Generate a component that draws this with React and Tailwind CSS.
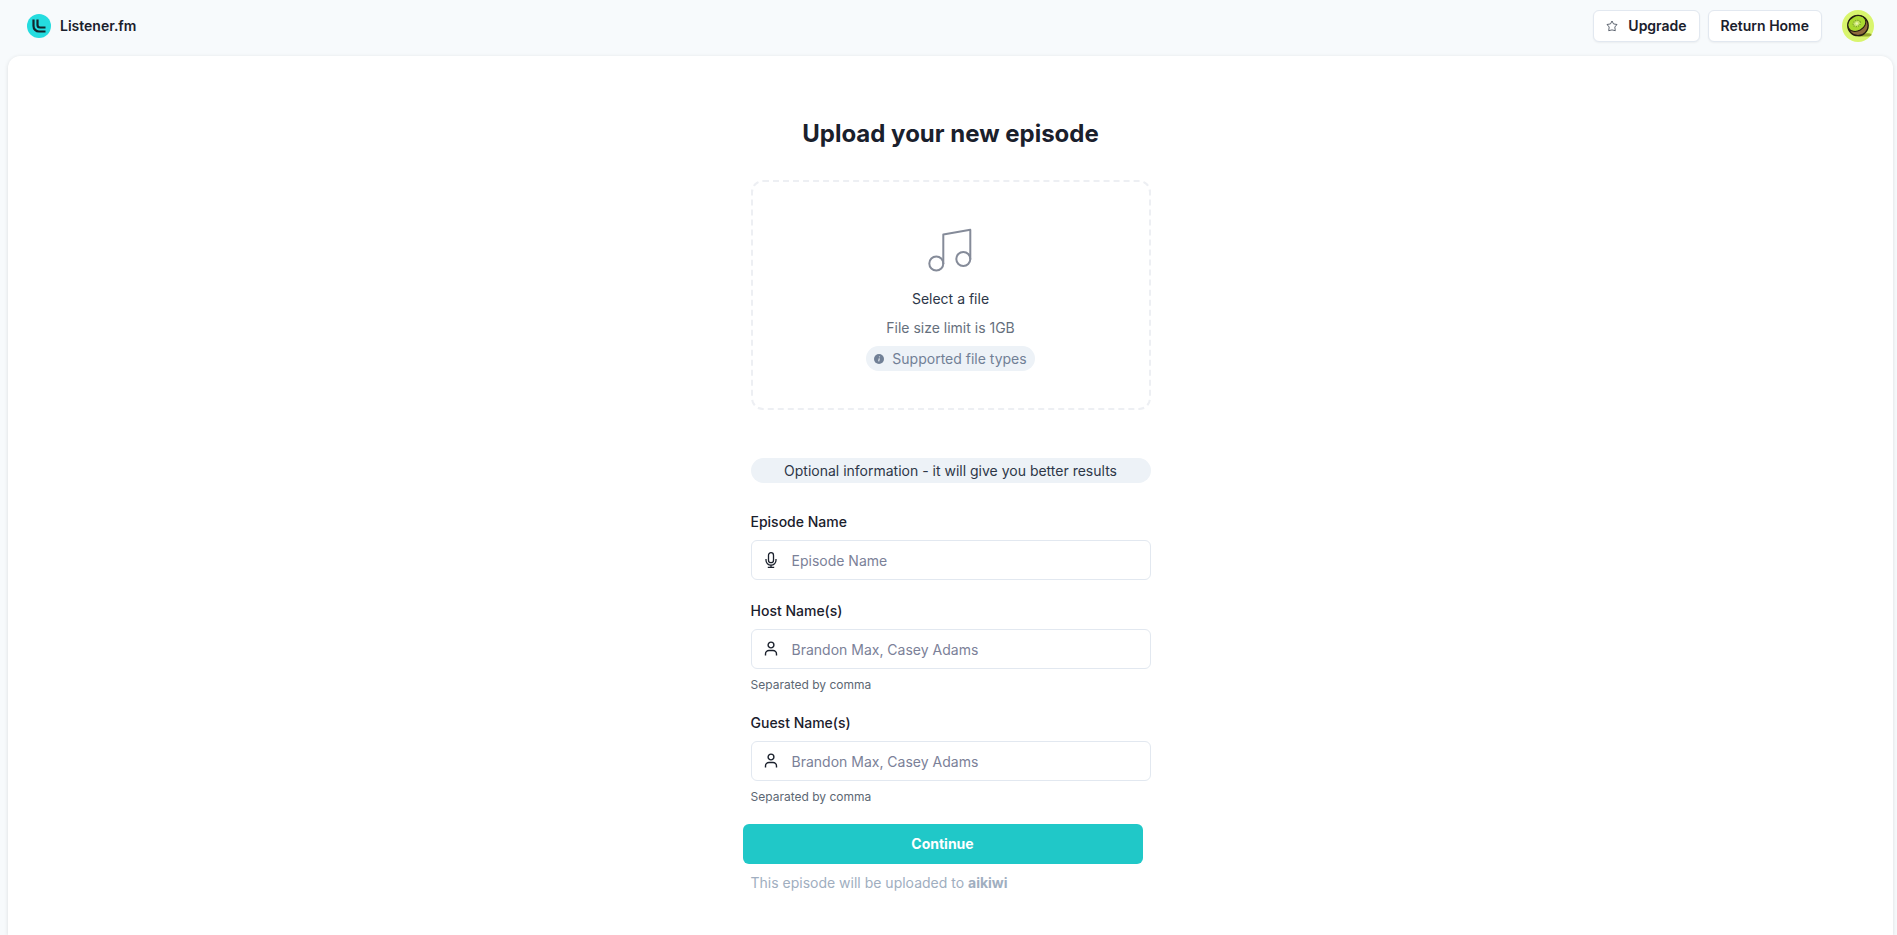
import { useState } from "react";

function Logo() {
  return (
    <svg viewBox="0 0 24 24" className="size-6" aria-hidden="true">
      <circle cx="12" cy="12" r="12" fill="#25dcdf" />
      <g fill="none" stroke="#12252d" strokeWidth="2.200">
        <path d="M6.500 5.500V12a5.500 5.500 0 0 0 5.500 5.500h6.500" />
        <path d="M10.500 5.500V11a2.500 2.500 0 0 0 2.500 2.500h5.500" />
      </g>
    </svg>
  );
}

function Kiwi() {
  return (
    <svg viewBox="0 0 32 32" className="size-8" aria-hidden="true">
      <circle cx="16" cy="16" r="16" fill="#d9f56e" />
      <path d="M15 26.500h11c2.500-.3 4-1 3.500-2-.3-.8-2-1.200-5-1.200z" fill="#96a82c" />
      <circle cx="16" cy="15.500" r="10.200" fill="#8f6a3c" stroke="#241c10" strokeWidth="1.300" />
      <ellipse
        cx="14.800"
        cy="13.500"
        rx="9.400"
        ry="7.400"
        transform="rotate(-28 14.800 13.500)"
        fill="#a9d92f"
        stroke="#241c10"
        strokeWidth="1"
      />
      <ellipse
        cx="14.800"
        cy="13.500"
        rx="3.800"
        ry="3"
        transform="rotate(-28 14.800 13.500)"
        fill="#c9e66a"
        stroke="#6f9422"
        strokeWidth="1"
        strokeDasharray="1.200 1"
      />
      <circle cx="14.800" cy="13.500" r="1.300" fill="#e9f5b4" />
    </svg>
  );
}

function StarIcon() {
  return (
    <svg viewBox="0 0 12 12" className="size-3" fill="none" stroke="#3a4250" strokeWidth="0.800" aria-hidden="true">
      <path d="M6 1l1.500 2.900 3.500.6-2.200 2.500.5 3.700L6 9.900l-3.300.8.5-3.700L1 4.500l3.500-.6z" strokeLinejoin="round" />
    </svg>
  );
}

function MusicIcon() {
  return (
    <svg viewBox="0 0 48 48" className="size-12" fill="none" stroke="#858b99" strokeWidth="2" aria-hidden="true">
      <path d="M17.300 38V8.500l27-4.700V33.500" strokeLinejoin="round" />
      <circle cx="10.300" cy="37.500" r="7" />
      <circle cx="37.300" cy="33" r="7" />
    </svg>
  );
}

function MicIcon() {
  return (
    <svg viewBox="0 0 16 16" className="size-4" fill="none" stroke="#1a202c" strokeWidth="1.300" aria-hidden="true">
      <rect x="5.500" y="0.700" width="5" height="10" rx="2.500" />
      <path d="M3 7v1.200a5 5 0 0 0 10 0V7M8 13.200v2M4.800 15.300h6.400" />
    </svg>
  );
}

function UserIcon() {
  return (
    <svg viewBox="0 0 16 16" className="size-4" fill="none" stroke="#1a202c" strokeWidth="1.400" aria-hidden="true">
      <circle cx="8" cy="4" r="2.900" />
      <path d="M2.500 14.500V13a3.500 3.500 0 0 1 3.500-3.500h4a3.500 3.500 0 0 1 3.500 3.500v1.500" />
    </svg>
  );
}

function InfoIcon() {
  return (
    <svg viewBox="0 0 10 10" className="size-2.5" aria-hidden="true">
      <circle cx="5" cy="5" r="5" fill="#718096" />
      <path d="M5.300 4.300L4.700 7.400M5.500 2.400v.8" stroke="#edf2f7" strokeWidth="1.100" />
    </svg>
  );
}

function Field({ id, label, placeholder, icon, helper, value, onChange }) {
  return (
    <div>
      <label htmlFor={id} className="block mb-2 text-sm leading-[21px] font-medium">
        {label}
      </label>
      <div className="flex items-center h-10 rounded-md border border-[#e2e8f0] focus-within:border-[#20c8c8]">
        <span className="w-[38px] flex justify-center">{icon}</span>
        <input
          type="text"
          id={id}
          placeholder={placeholder}
          value={value}
          onChange={onChange}
          className="flex-1 h-full pl-0.5 text-sm outline-none bg-transparent placeholder:text-[#7b8198]"
        />
      </div>
      {helper && <p className="mt-2 text-xs leading-[15px] text-[#5c6773]">{helper}</p>}
    </div>
  );
}

export default function App() {
  const [formData, setFormData] = useState({ episode: "", host: "", guest: "" });

  const handleChange = (e) => {
    setFormData({ ...formData, [e.target.id]: e.target.value });
  };
  const handleSubmit = (e) => {
    e.preventDefault();
  };

  return (
    <div className="min-h-screen flex flex-col bg-[#f7fafc] text-[#1a202c] font-[Inter,sans-serif]">
      <header className="h-14 flex items-center justify-between pl-[27px] pr-[23px] pb-1">
        <a href="#" className="flex items-center gap-[9px] text-sm font-semibold">
          <Logo />
          Listener.fm
        </a>
        <div className="flex items-center gap-2">
          <button
            type="button"
            className="h-8 px-3 flex items-center gap-2.5 rounded-md border border-[#e2e8f0] bg-white text-sm font-semibold shadow-xs"
          >
            <StarIcon />
            Upgrade
          </button>
          <button
            type="button"
            className="h-8 px-3 rounded-md border border-[#e2e8f0] bg-white text-sm font-semibold shadow-xs"
          >
            Return Home
          </button>
          <button type="button" aria-label="Account" className="ml-3">
            <Kiwi />
          </button>
        </div>
      </header>

      <main className="flex-1 ml-2 mr-1 rounded-t-xl bg-white shadow-[0_1px_4px_rgba(0,0,0,0.12)]">
        <form className="w-full max-w-[400px] mx-auto pt-[60px] pb-10" onSubmit={handleSubmit}>
          <h1 className="text-2xl leading-9 font-bold text-center">Upload your new episode</h1>

          <div className="mt-7 h-[230px] flex flex-col items-center rounded-xl border-2 border-dashed border-[#edeff3] pt-11 text-sm leading-[21px]">
            <label htmlFor="file" className="flex flex-col items-center gap-3.5 text-[#2d3748] cursor-pointer">
              <MusicIcon />
              <span>Select a file</span>
            </label>
            <input type="file" id="file" accept="audio/*,video/*" className="sr-only" />
            <p className="mt-2 text-[#66707d]">File size limit is 1GB</p>
            <button
              type="button"
              className="mt-2 h-[25px] px-2 flex items-center gap-2 rounded-full bg-[#edf2f7] text-[#718096]"
            >
              <InfoIcon />
              Supported file types
            </button>
          </div>

          <p className="mt-12 h-[25px] rounded-full bg-[#edf2f7] text-center text-sm leading-[25px] text-[#2d3748]">
            Optional information - it will give you better results
          </p>

          <div className="mt-7 flex flex-col gap-5">
            <Field
              id="episode"
              label="Episode Name"
              placeholder="Episode Name"
              icon={<MicIcon />}
              value={formData.episode}
              onChange={handleChange}
            />
            <Field
              id="host"
              label="Host Name(s)"
              placeholder="Brandon Max, Casey Adams"
              icon={<UserIcon />}
              helper="Separated by comma"
              value={formData.host}
              onChange={handleChange}
            />
            <Field
              id="guest"
              label="Guest Name(s)"
              placeholder="Brandon Max, Casey Adams"
              icon={<UserIcon />}
              helper="Separated by comma"
              value={formData.guest}
              onChange={handleChange}
            />
          </div>

          <button
            type="submit"
            className="mt-5 -ml-2 w-full h-10 rounded-md bg-[#20c8c8] text-white text-sm font-bold"
          >
            Continue
          </button>
          <p className="mt-2 text-sm leading-[21px] text-[#a0aec0]">
            This episode will be uploaded to <b>aikiwi</b>
          </p>
        </form>
      </main>
    </div>
  );
}
